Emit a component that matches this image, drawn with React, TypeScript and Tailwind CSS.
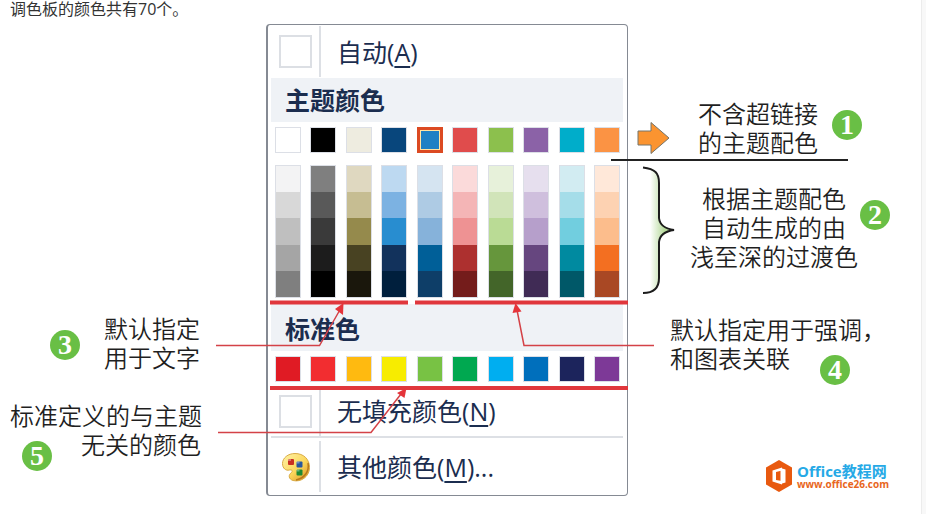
import type { ReactNode } from "react";

type Column = { name: string; base: string; shades: string[] };

const themeColumns: Column[] = [
  { name: "白色", base: "#ffffff", shades: ["#f3f3f4", "#d8d8d8", "#bfbfbf", "#a5a5a5", "#7f7f7f"] },
  { name: "黑色", base: "#000000", shades: ["#7f7f7f", "#595959", "#3a3a3a", "#1c1c1c", "#000000"] },
  { name: "茶色", base: "#eeece0", shades: ["#dfd8c0", "#c6bd92", "#958a4c", "#484222", "#1a170c"] },
  { name: "深蓝", base: "#08467c", shades: ["#bdd9f1", "#7cb2e2", "#288dd0", "#12325c", "#001f3d"] },
  { name: "蓝色", base: "#1c80c4", shades: ["#d5e4f1", "#aecbe4", "#86b2da", "#005f98", "#0e3e68"] },
  { name: "红色", base: "#e04c4c", shades: ["#fbdada", "#f4b5b6", "#ee9293", "#ad302f", "#741c1b"] },
  { name: "绿色", base: "#8cc04d", shades: ["#e7f1da", "#d1e4b9", "#badb95", "#66963c", "#436529"] },
  { name: "紫色", base: "#8b62a7", shades: ["#e6dfee", "#cfbfdd", "#b69fcb", "#66467f", "#402b55"] },
  { name: "水绿", base: "#00adca", shades: ["#d2ecf2", "#a5dde9", "#71cedf", "#008aa0", "#005868"] },
  { name: "橙色", base: "#fb9344", shades: ["#ffe8d9", "#fdd2b2", "#fcbd8c", "#f36f21", "#a94824"] },
];

const standardColors = [
  { name: "深红", value: "#e01b24" },
  { name: "红色", value: "#f22d30" },
  { name: "橙色", value: "#ffba10" },
  { name: "黄色", value: "#f7ec00" },
  { name: "浅绿", value: "#78c244" },
  { name: "绿色", value: "#00a850" },
  { name: "浅蓝", value: "#00aef0" },
  { name: "蓝色", value: "#006fbc" },
  { name: "深蓝", value: "#1c245c" },
  { name: "紫色", value: "#7d3997" },
];

function Swatch({ name, color, selected = false }: { name: string; color: string; selected?: boolean }) {
  return (
    <button
      aria-label={name}
      className={
        selected
          ? "size-[26px] border-[3px] border-[#dc4a22] bg-[#ffe3a0] p-px"
          : "size-[26px] border border-[#dcdfe6]"
      }
      style={selected ? undefined : { backgroundColor: color }}
    >
      {selected && <span className="block size-full" style={{ backgroundColor: color }} />}
    </button>
  );
}

function Badge({ children, className = "" }: { children: ReactNode; className?: string }) {
  return (
    <span
      className={`flex size-[30px] shrink-0 items-center justify-center rounded-full bg-[#69bf45] font-['Liberation_Serif',serif] text-[28px] leading-[30px] font-bold text-white ${className}`}
    >
      {children}
    </span>
  );
}

function MenuRow({ icon, children, className }: { icon: ReactNode; children: ReactNode; className: string }) {
  return (
    <button className={`flex w-full items-center text-left text-[25px] leading-8 ${className}`}>
      <span className="flex w-[53px] shrink-0 justify-center self-stretch border-r-2 border-[#dde0e5] pl-1">
        <span className="flex items-center">{icon}</span>
      </span>
      <span className="pl-4">{children}</span>
    </button>
  );
}

function EmptyBox() {
  return <span className="block size-[33px] border-2 border-[#dcdfe4] bg-white" />;
}

function PaletteIcon() {
  return (
    <svg width="30" height="30" viewBox="0 0 30 30" aria-hidden="true">
      <defs>
        <linearGradient id="wood" x1="0" y1="0" x2="1" y2="1">
          <stop offset="0" stopColor="#fff3a8" />
          <stop offset="0.55" stopColor="#fbd75c" />
          <stop offset="1" stopColor="#d98f1c" />
        </linearGradient>
      </defs>
      <path
        d="M14 1.500C7 1.500 1.500 6 1.500 11.500C1.500 16.500 5 19 8.500 18C11 17.500 12 19 10.500 20.500C7 23 7.500 27 12 28.500C20 30.500 28.500 24.500 28.500 15.500C28.500 7 22.500 1.500 14 1.500Z"
        fill="url(#wood)"
        stroke="#d9ab45"
        strokeWidth="1"
      />
      <path d="M27 11C28.500 19 24 26 15 28" fill="none" stroke="#b9791a" strokeWidth="1.500" />
      <rect x="7" y="7" width="6" height="6" rx="1" fill="#c92f20" />
      <rect x="15.500" y="9.500" width="6" height="6" rx="1" fill="#28569e" />
      <rect x="15.500" y="17.500" width="6" height="6" rx="1" fill="#1e8a33" />
      <path d="M7 7h3v2H7zM15.500 9.500h3v2h-3zM15.500 17.500h3v2h-3z" fill="#ffffff" opacity="0.350" />
    </svg>
  );
}

function ColorMenu() {
  return (
    <div className="w-[362px] shrink-0 rounded border border-l-2 border-[#858a93] bg-white font-['Open_Sans','Noto_Sans_CJK_SC',sans-serif] font-normal text-[#1b2d4f]">
      <MenuRow className="h-[53px] py-px" icon={<EmptyBox />}>
        自动(<u className="underline-offset-4">A</u>)
      </MenuRow>
      <h2 className="mr-1 ml-[3px] h-11 bg-[#eff2f6] pl-[14px] text-[25px] leading-[44px] font-bold">主题颜色</h2>
      <div className="mt-[5px] flex justify-between px-[7px]">
        {themeColumns.map((c) => (
          <Swatch key={c.name} name={c.name} color={c.base} selected={c.name === "蓝色"} />
        ))}
      </div>
      <div className="mt-3 flex justify-between px-[7px]">
        {themeColumns.map((c) => (
          <div key={c.name} className="flex h-[133px] w-[26px] flex-col border border-[#dcdfe6]">
            {c.shades.map((s, i) => (
              <button key={s} aria-label={`${c.name} ${i + 1}`} className="w-full flex-1" style={{ backgroundColor: s }} />
            ))}
          </div>
        ))}
      </div>
      <h2 className="mt-[6px] mr-1 ml-[3px] h-[47px] bg-[#eff2f6] pl-[14px] text-[25px] leading-[50px] font-bold">标准色</h2>
      <div className="mt-[5px] flex justify-between px-[7px]">
        {standardColors.map((c) => (
          <Swatch key={c.value} name={c.name} color={c.value} />
        ))}
      </div>
      <MenuRow className="mt-1 h-[50px]" icon={<EmptyBox />}>
        无填充颜色(<u className="underline-offset-4">N</u>)
      </MenuRow>
      <hr className="mr-1 ml-[3px] border-t-2 border-[#dde0e5]" />
      <MenuRow className="h-[57px] py-[3px]" icon={<PaletteIcon />}>
        其他颜色(<u className="underline-offset-4">M</u>)...
      </MenuRow>
    </div>
  );
}

function LeftNotes() {
  return (
    <div className="w-[266px] shrink-0 pt-[289px]">
      <div className="flex items-center gap-6 pl-[50px]">
        <Badge>3</Badge>
        <p className="mb-[6px]">
          默认指定
          <br />
          用于文字
        </p>
      </div>
      <div className="mt-[23px] pl-[10px] whitespace-nowrap">
        <p>标准定义的与主题</p>
        <div className="flex gap-[29px] pl-3">
          <Badge className="mt-3">5</Badge>
          <p>无关的颜色</p>
        </div>
      </div>
    </div>
  );
}

function SiteLogo() {
  return (
    <a href="#office26" className="flex items-center gap-1 font-['Open_Sans','Noto_Sans_CJK_SC',sans-serif] font-bold">
      <svg width="28" height="34" viewBox="0 0 28 34" aria-hidden="true">
        <path d="M14 1L27 8.500V25.500L14 33L1 25.500V8.500Z" fill="#e8590f" />
        <path d="M7.500 11.500L17 8.500V11.500L11 13V21L17 22V25.500L7.500 22.500Z" fill="#fff" />
        <path d="M15.500 9L20.500 10.500V23.500L15.500 25Z" fill="#fff" />
      </svg>
      <span>
        <span className="block text-[15px] leading-4 text-[#26a9e6]">Office教程网</span>
        <span className="block text-[10px] leading-[10px] text-[#e8661c]">www.office26.com</span>
      </span>
    </a>
  );
}

function RightNotes() {
  return (
    <div className="flex-1 pt-[74px] whitespace-nowrap">
      <div className="flex items-center pl-[9px]">
        <svg width="33" height="34" viewBox="0 0 33 34" className="mt-[22px]" aria-hidden="true">
          <path d="M1 10H14V1.500L32 17L14 32.500V24H1Z" fill="#fb9430" stroke="#75746a" strokeWidth="1" />
        </svg>
        <p className="ml-7">
          不含超链接
          <br />
          的主题配色
        </p>
        <Badge className="mr-3 mb-1 ml-[14px]">1</Badge>
      </div>
      <div className="mt-[10px] flex items-center pl-[14px]">
        <svg width="34" height="129" viewBox="0 0 34 129" aria-hidden="true">
          <defs>
            <linearGradient id="braceFill">
              <stop offset="0" stopColor="#fff" />
              <stop offset="0.600" stopColor="#b5d99a" />
            </linearGradient>
          </defs>
          <path
            d="M8 1.500Q17 5 17 17V52Q19 61 32 64Q19 67 17 76V112Q16 124 8 127Z"
            fill="url(#braceFill)"
          />
          <path
            d="M1 1.500C13 3 17 7 17 17V52Q18 62 32 64Q18 66 17 76V112C17 122 12 127 1 127"
            fill="none"
            stroke="#1c1c1c"
            strokeWidth="2"
          />
        </svg>
        <p className="mb-[8px] ml-[14px] text-center">
          根据主题配色
          <br />
          自动生成的由
          <br />
          浅至深的过渡色
        </p>
        <Badge className="mb-8 ml-[2px]">2</Badge>
      </div>
      <div className="mt-[19px] pl-[42px]">
        <p>默认指定用于强调，</p>
        <div className="flex gap-[30px]">
          <p>和图表关联</p>
          <Badge className="mt-3">4</Badge>
        </div>
      </div>
      <div className="mt-[74px] flex pl-[137px]">
        <SiteLogo />
      </div>
    </div>
  );
}

function Leaders() {
  return (
    <svg width="921" height="473" viewBox="0 24 921 473" className="pointer-events-none absolute top-0 left-0" aria-hidden="true">
      <g stroke="#e0373c" strokeWidth="4">
        <path d="M270 302.500H408M415 302.500H628M270 388H628" />
      </g>
      <g fill="none" stroke="#d44247" strokeWidth="1.500">
        <path d="M216 345.500H319.500L341 308" />
        <path d="M654 345.500H524L517 310" />
        <path d="M218 432.500H371L401 394" />
      </g>
      <g fill="#e5343a">
        <path d="M343.500 303L343 315L335 309Z" />
        <path d="M515.500 303L521.500 311.500L512.500 313Z" />
        <path d="M406.500 388L404.500 398L397 393Z" />
      </g>
      <path d="M611 160H848" stroke="#222" strokeWidth="2" />
    </svg>
  );
}

export default function App() {
  return (
    <div className="min-h-screen overflow-x-hidden bg-[#f8f8f8] pr-1">
      <main className="min-h-[514px] border-r border-[#ececec] bg-white font-['Noto_Sans_CJK_SC',sans-serif] text-[#1f1f1f]">
        <p className="h-6 pl-[10px] font-['Open_Sans','Noto_Sans_CJK_SC',sans-serif] text-base leading-[18px] text-[#333]">
          调色板的颜色共有70个。
        </p>
        <figure className="relative flex text-2xl leading-[29px] font-[350]">
          <LeftNotes />
          <ColorMenu />
          <RightNotes />
          <Leaders />
        </figure>
      </main>
    </div>
  );
}
